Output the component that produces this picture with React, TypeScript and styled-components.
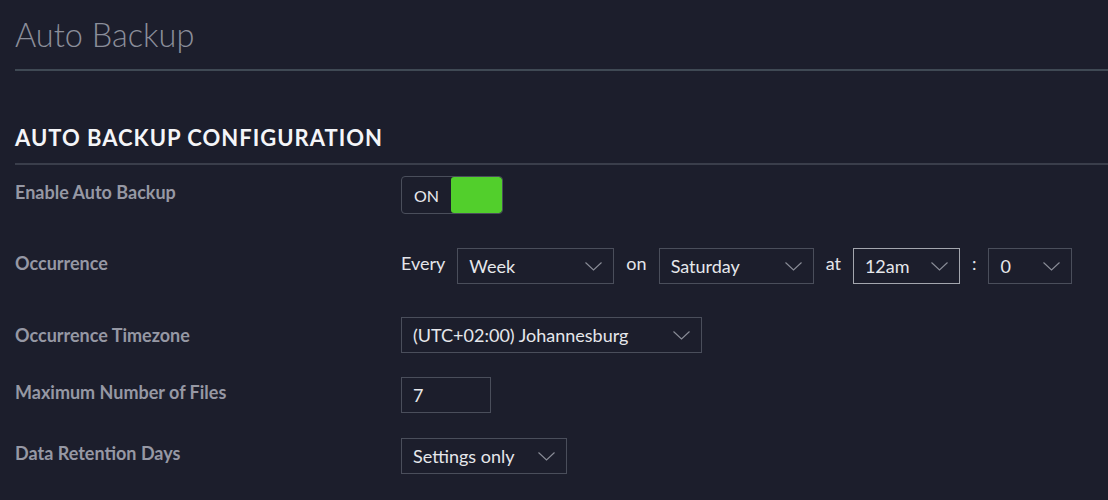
import styled, { createGlobalStyle } from 'styled-components'

const GlobalStyle = createGlobalStyle`
  html, body {
    margin: 0;
    padding: 0;
    background: #1c1e2c;
  }
  body {
    font-family: Lato, "Noto Sans", sans-serif;
    color: #e4e5ea;
  }
`

const Page = styled.div`
  padding-left: 15px;
  height: 500px;
  overflow: hidden;
`

const Title = styled.h1`
  margin: 0;
  padding-top: 16px;
  height: 53px;
  font-size: 32.5px;
  line-height: 38px;
  font-weight: 300;
  color: #8b8e9a;
  border-bottom: 2px solid #3f4954;
`

const Section = styled.h2`
  margin: 0;
  margin-top: 54px;
  font-size: 22px;
  line-height: 26px;
  font-weight: 700;
  letter-spacing: 1px;
  color: #f4f5f8;
  padding-bottom: 12px;
  border-bottom: 2px solid #3a3e4b;
`

const Form = styled.div`
  display: flex;
  flex-direction: column;
`

const Row = styled.div<{ $top: number }>`
  display: flex;
  align-items: center;
  margin-top: ${p => p.$top}px;
`

const Label = styled.div<{ $lift?: number }>`
  width: 386px;
  flex: 0 0 386px;
  font-size: 18px;
  font-weight: 700;
  color: #9698a4;
  padding-bottom: ${p => p.$lift ?? 6}px;
`

const Controls = styled.div`
  display: flex;
  align-items: center;
  gap: 12px;
`

const Word = styled.span`
  font-size: 18px;
  color: #e4e5ea;
  padding-bottom: 6px;
`

const Toggle = styled.div`
  display: flex;
  width: 102px;
  height: 38px;
  box-sizing: border-box;
  border: 1.5px solid #4a4e5b;
  border-radius: 4px;
  overflow: hidden;
`

const ToggleText = styled.span`
  flex: 0 0 49px;
  display: flex;
  align-items: center;
  justify-content: center;
  font-size: 16px;
  color: #e9eaee;
`

const ToggleKnob = styled.span`
  flex: 1;
  background: #52cf2c;
  border-radius: 3px;
`

const Box = styled.div<{ $w: number; $focus?: boolean }>`
  display: flex;
  align-items: center;
  justify-content: space-between;
  width: ${p => p.$w}px;
  height: 36px;
  box-sizing: border-box;
  padding: 0 11px 0 11px;
  border: 1.5px solid ${p => (p.$focus ? '#a3a6ae' : '#4a4e5b')};
  font-size: 18px;
  color: #e6e7eb;
`

const Chevron = () => (
  <svg width="17" height="9" viewBox="0 0 17 9" fill="none">
    <polyline points="0.5,0.5 8.5,8 16.5,0.5" stroke="#8a8d98" strokeWidth="1.1" />
  </svg>
)

const Select = ({ value, width, focus }: { value: string; width: number; focus?: boolean }) => (
  <Box $w={width} $focus={focus}>
    <span>{value}</span>
    <Chevron />
  </Box>
)

export default function App() {
  return (
    <Page>
      <GlobalStyle />
      <Title>Auto Backup</Title>
      <Section>AUTO BACKUP CONFIGURATION</Section>
      <Form>
        <Row $top={11}>
          <Label>Enable Auto Backup</Label>
          <Toggle>
            <ToggleText>ON</ToggleText>
            <ToggleKnob />
          </Toggle>
        </Row>
        <Row $top={34}>
          <Label>Occurrence</Label>
          <Controls>
            <Word>Every</Word>
            <Select value="Week" width={157} />
            <Word>on</Word>
            <Select value="Saturday" width={155} />
            <Word>at</Word>
            <Select value="12am" width={107} focus />
            <Word>:</Word>
            <Select value="0" width={84} />
          </Controls>
        </Row>
        <Row $top={33}>
          <Label $lift={0}>Occurrence Timezone</Label>
          <Select value="(UTC+02:00) Johannesburg" width={301} />
        </Row>
        <Row $top={24}>
          <Label>Maximum Number of Files</Label>
          <Box $w={90}>7</Box>
        </Row>
        <Row $top={25}>
          <Label>Data Retention Days</Label>
          <Select value="Settings only" width={166} />
        </Row>
      </Form>
    </Page>
  )
}
